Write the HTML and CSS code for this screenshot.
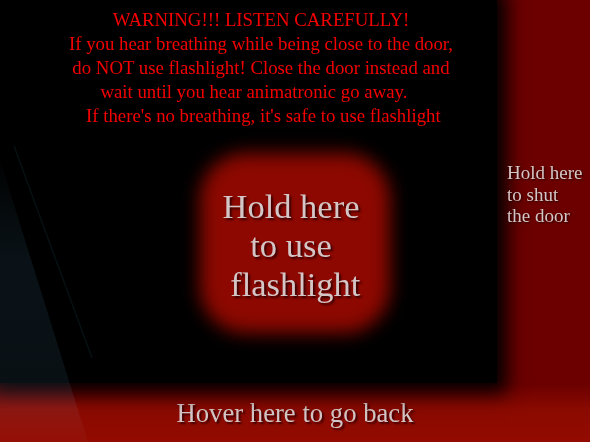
FILE: index.html
```html
<!DOCTYPE html>
<html>
<head>
<meta charset="utf-8">
<link rel="stylesheet" href="styles.css">
</head>
<body>
<div class="screen">
  <main class="office">
    <div class="warning">
      <div>WARNING!!! LISTEN CAREFULLY!</div>
      <div>If you hear breathing while being close to the door,</div>
      <div>do NOT use flashlight! Close the door instead and</div>
      <div>wait until you hear animatronic go away.&nbsp;&nbsp;&nbsp;</div>
      <div>&nbsp;If there's no breathing, it's safe to use flashlight</div>
    </div>
    <div class="flash-wrap">
      <div class="flash">
        <span class="flash-text">Hold here<br>to use<br>&nbsp;flashlight</span>
      </div>
    </div>
  </main>
  <aside class="door">
    <span class="door-text">Hold here<br>to shut<br>the door</span>
  </aside>
  <footer class="back">Hover here to go back</footer>
  <svg class="streaks" width="110" height="442" viewBox="0 0 110 442">
    <defs>
      <linearGradient id="g" x1="0" y1="0" x2="0" y2="1">
        <stop offset="0" stop-color="#091216" stop-opacity="0.1"/>
        <stop offset="0.35" stop-color="#0a1318" stop-opacity="0.95"/>
        <stop offset="0.85" stop-color="#0a1318" stop-opacity="0.85"/>
        <stop offset="1" stop-color="#0a1318" stop-opacity="0.25"/>
      </linearGradient>
    </defs>
    <polygon points="0,160 0,442 88,442" fill="url(#g)"/>
    <line x1="14" y1="146" x2="92" y2="358" stroke="#071014" stroke-width="1.4"/>
  </svg>
</div>
</body>
</html>
```

FILE: styles.css
```css
html, body {
  margin: 0;
  padding: 0;
  background: #000;
}
body {
  width: 590px;
  height: 442px;
  overflow: hidden;
  font-family: "Liberation Serif", "Times New Roman", serif;
}
.screen {
  position: relative;
  width: 590px;
  height: 442px;
  display: grid;
  grid-template-columns: 497px 93px;
  grid-template-rows: 383px 59px;
  background: #6c0000;
  overflow: hidden;
}
.office {
  grid-column: 1;
  grid-row: 1;
  background: #000;
  box-shadow: 0 0 18px 10px #000;
  position: relative;
  z-index: 2;
  display: flex;
  flex-direction: column;
}
.warning {
  padding: 8px 0 0 25px;
  color: #f50000;
  font-size: 18.8px;
  line-height: 24px;
  text-align: center;
  white-space: nowrap;
}
.flash-wrap {
  display: flex;
  justify-content: flex-start;
  padding: 25px 0 0 200px;
}
.flash {
  position: relative;
  width: 190px;
  height: 180px;
  display: flex;
  align-items: center;
  justify-content: center;
}
.flash::before {
  content: "";
  position: absolute;
  inset: 0;
  background: #8c0800;
  border-radius: 46px;
  filter: blur(9px);
}
.flash-text {
  position: relative;
  color: #d4c6c6;
  font-size: 34.5px;
  line-height: 39px;
  text-align: center;
  text-shadow: 2px 2px 2px #3a0000;
  margin: 4px 8px 0 0;
}
.door {
  grid-column: 2;
  grid-row: 1;
  position: relative;
  z-index: 3;
  padding: 162px 0 0 10px;
}
.door-text {
  display: block;
  color: #d4c6c6;
  font-size: 19px;
  line-height: 21.5px;
  text-shadow: 1px 1px 2px #2a0000;
  white-space: nowrap;
}
.back {
  grid-column: 1 / span 2;
  grid-row: 2;
  background: linear-gradient(180deg, #6a0000 0%, #8a0a00 45%, #930a00 100%);
  color: #d4c6c6;
  font-size: 26.7px;
  text-align: center;
  padding-top: 15px;
  text-shadow: 2px 2px 2px #3a0000;
  position: relative;
  z-index: 1;
}
.streaks {
  position: absolute;
  left: 0;
  top: 0;
  z-index: 3;
  pointer-events: none;
  mix-blend-mode: screen;
}
```
